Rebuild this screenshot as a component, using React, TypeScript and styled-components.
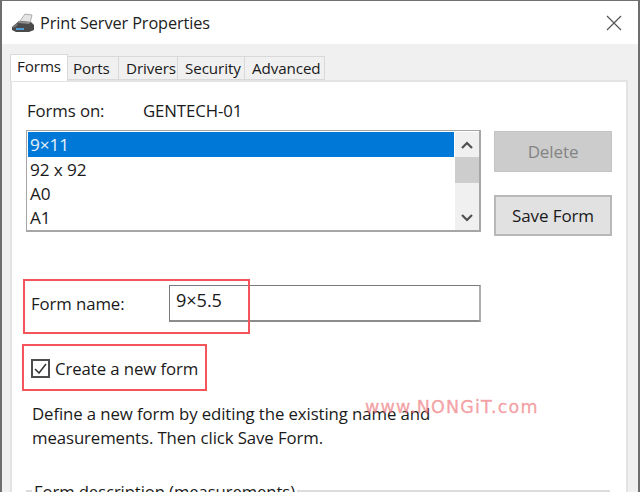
import styled, { createGlobalStyle } from "styled-components";

const GlobalStyle = createGlobalStyle`
  html, body {
    margin: 0;
    padding: 0;
    background: #ffffff;
  }
  * {
    box-sizing: border-box;
  }
`;

const Window = styled.div`
  position: relative;
  width: 640px;
  height: 492px;
  overflow: hidden;
  display: flex;
  flex-direction: column;
  border-top: 1px solid #707070;
  border-left: 2px solid #6e6e6e;
  border-right: 2px solid #6e6e6e;
  font-family: "Open Sans", "Noto Sans", sans-serif;
  font-size: 16.8px;
  color: #1a1a1a;
  letter-spacing: -0.1px;
`;

const TitleBar = styled.div`
  height: 43px;
  flex: none;
  display: flex;
  align-items: center;
  padding: 0 16px 0 9px;
  gap: 5px;
  background: #ffffff;
`;

const Title = styled.div`
  flex: 1;
  font-size: 16.3px;
  color: #222222;
`;

const Chrome = styled.div`
  flex: 1;
  display: flex;
  flex-direction: column;
  background: #f0f0f0;
  padding: 10px 10px 0 8px;
`;

const TabStrip = styled.div`
  height: 26px;
  flex: none;
  display: flex;
  align-items: flex-end;
  position: relative;
  z-index: 1;
`;

const Tab = styled.div<{ $active?: boolean; $width: number; $inset: number }>`
  width: ${({ $width }) => $width}px;
  height: ${({ $active }) => ($active ? 27 : 24)}px;
  margin-bottom: ${({ $active }) => ($active ? -1 : 0)}px;
  padding: 0 0 ${({ $active }) => ($active ? 4 : 0)}px ${({ $inset }) => $inset}px;
  display: flex;
  align-items: center;
  background: ${({ $active }) => ($active ? "#ffffff" : "#f0f0f0")};
  border: 1px solid #d9d9d9;
  border-bottom: ${({ $active }) => ($active ? "none" : "1px solid #d9d9d9")};
  border-left: ${({ $active }) => ($active ? "1px solid #d9d9d9" : "none")};
  font-size: 15.2px;
`;

const Panel = styled.div`
  flex: 1;
  display: flex;
  flex-direction: column;
  background: #ffffff;
  border: 2px solid #e3e3e3;
  border-bottom: none;
  padding: 16px 14px 0 14px;
`;

const ServerRow = styled.div`
  display: flex;
  height: 24px;
  align-items: center;
  padding-left: 1px;
`;

const ServerLabel = styled.div`
  width: 116px;
`;

const ListRow = styled.div`
  display: flex;
  margin-top: 8px;
  gap: 13px;
`;

const ListBox = styled.div`
  width: 455px;
  height: 102px;
  flex: none;
  display: flex;
  border: 1px solid #a6a6a6;
  border-right-width: 2px;
  border-bottom-width: 2px;
  padding: 1px 0 0 1px;
`;

const Items = styled.div`
  flex: 1;
  overflow: hidden;
`;

const Item = styled.div<{ $selected?: boolean }>`
  height: ${({ $selected }) => ($selected ? 25 : 24)}px;
  padding-left: 2px;
  display: flex;
  align-items: center;
  background: ${({ $selected }) => ($selected ? "#0078d7" : "transparent")};
  color: ${({ $selected }) => ($selected ? "#e8f2fb" : "#1a1a1a")};
  font-size: 17.2px;
`;

const ScrollBar = styled.div`
  width: 24px;
  flex: none;
  margin-left: 1px;
  display: flex;
  flex-direction: column;
  background: #f0f0f0;
`;

const ScrollButton = styled.div`
  height: 25px;
  flex: none;
  display: flex;
  align-items: center;
  justify-content: center;
`;

const ScrollThumb = styled.div`
  height: 26px;
  flex: none;
  background: #cdcdcd;
`;

const ScrollTrack = styled.div`
  flex: 1;
`;

const ButtonColumn = styled.div`
  display: flex;
  flex-direction: column;
  gap: 23px;
  padding-top: 1px;
`;

const Button = styled.div<{ $disabled?: boolean }>`
  width: 118px;
  height: 41px;
  display: flex;
  align-items: center;
  justify-content: center;
  font-size: 17px;
  background: ${({ $disabled }) => ($disabled ? "#cccccc" : "#e1e1e1")};
  border: ${({ $disabled }) =>
    $disabled ? "1px solid #c4c4c4" : "2px solid #b8b8b8"};
  color: ${({ $disabled }) => ($disabled ? "#848484" : "#1a1a1a")};
`;

const NameRow = styled.div`
  display: flex;
  align-items: flex-start;
  margin-top: 49px;
  padding-left: 5px;
`;

const NameLabel = styled.div`
  width: 138px;
  padding-top: 7px;
`;

const NameInput = styled.div`
  width: 312px;
  height: 37px;
  padding: 2px 6px;
  font-size: 18.2px;
  border: 1px solid #7a7a7a;
  border-right: 2px solid #adadad;
  border-bottom: 2px solid #8c8c8c;
`;

const CheckRow = styled.div`
  display: flex;
  align-items: center;
  gap: 5px;
  margin-top: 35px;
  padding-left: 5px;
`;

const CheckBox = styled.div`
  width: 19px;
  height: 19px;
  flex: none;
  display: flex;
  align-items: center;
  justify-content: center;
  border: 2px solid #4d4d4d;
`;

const HelpText = styled.div`
  margin-top: 22px;
  padding-left: 6px;
  line-height: 24px;
  width: 422px;
`;

const FormGroup = styled.div`
  margin-top: 40px;
  height: 30px;
  border-top: 2px solid #dcdcdc;
  margin-right: 2px;
`;

const GroupTitle = styled.div`
  display: inline-block;
  position: relative;
  top: -12px;
  margin-left: 6px;
  padding: 0 2px;
  background: #ffffff;
  font-size: 16.7px;
`;

const Highlight = styled.div<{ $left: number; $top: number; $width: number; $height: number }>`
  position: absolute;
  left: ${({ $left }) => $left}px;
  top: ${({ $top }) => $top}px;
  width: ${({ $width }) => $width}px;
  height: ${({ $height }) => $height}px;
  border: 2px solid #f4555a;
  pointer-events: none;
`;

const Watermark = styled.div`
  position: absolute;
  left: 363px;
  top: 396px;
  font-family: "DejaVu Sans", sans-serif;
  font-size: 17.5px;
  letter-spacing: 1.2px;
  -webkit-text-stroke: 0.4px rgba(238, 110, 115, 0.55);
  color: rgba(238, 110, 115, 0.6);
  pointer-events: none;
`;

function PrinterIcon() {
  return (
    <svg width="24" height="22" viewBox="0 0 24 22">
      <path d="M9 9 L14 2 L21 3 L19 11 Z" fill="#e4e4e4" stroke="#9a9a9a" strokeWidth="0.8" />
      <path d="M1 15 L8 9 L20 10 L23 13 L23 18 L18 20 L5 20 L1 18 Z" fill="#4a4a4a" />
      <path d="M8 9 L20 10 L18 12 L7 11 Z" fill="#8c8c8c" />
      <path d="M5 16 L13 16 L13 18 L5 18 Z" fill="#4f9bd4" />
      <path d="M2 14 L7 11 L6 14 L2 16 Z" fill="#777777" />
    </svg>
  );
}

function CloseIcon() {
  return (
    <svg width="16" height="16" viewBox="0 0 16 16">
      <path d="M1 1 L15 15 M15 1 L1 15" stroke="#555555" strokeWidth="1.2" fill="none" />
    </svg>
  );
}

function Chevron({ up }: { up?: boolean }) {
  return (
    <svg width="12" height="8" viewBox="0 0 12 8">
      <path
        d={up ? "M1 7 L6 2 L11 7" : "M1 1 L6 6 L11 1"}
        stroke="#505050"
        strokeWidth="2.2"
        fill="none"
      />
    </svg>
  );
}

const tabs = [
  { label: "Forms", width: 58, inset: 6 },
  { label: "Ports", width: 51, inset: 5 },
  { label: "Drivers", width: 59, inset: 7 },
  { label: "Security", width: 67, inset: 7 },
  { label: "Advanced", width: 80, inset: 7 },
];

const forms = ["9×11", "92 x 92", "A0", "A1"];

export default function App() {
  return (
    <>
      <GlobalStyle />
      <Window>
        <TitleBar>
          <PrinterIcon />
          <Title>Print Server Properties</Title>
          <CloseIcon />
        </TitleBar>
        <Chrome>
          <TabStrip>
            {tabs.map((tab, index) => (
              <Tab key={tab.label} $active={index === 0} $width={tab.width} $inset={tab.inset}>
                {tab.label}
              </Tab>
            ))}
          </TabStrip>
          <Panel>
            <ServerRow>
              <ServerLabel>Forms on:</ServerLabel>
              <div>GENTECH-01</div>
            </ServerRow>
            <ListRow>
              <ListBox>
                <Items>
                  {forms.map((form, index) => (
                    <Item key={form} $selected={index === 0}>
                      {form}
                    </Item>
                  ))}
                </Items>
                <ScrollBar>
                  <ScrollButton>
                    <Chevron up />
                  </ScrollButton>
                  <ScrollThumb />
                  <ScrollTrack />
                  <ScrollButton>
                    <Chevron />
                  </ScrollButton>
                </ScrollBar>
              </ListBox>
              <ButtonColumn>
                <Button $disabled>Delete</Button>
                <Button>Save Form</Button>
              </ButtonColumn>
            </ListRow>
            <NameRow>
              <NameLabel>Form name:</NameLabel>
              <NameInput>9×5.5</NameInput>
            </NameRow>
            <CheckRow>
              <CheckBox>
                <svg width="13" height="11" viewBox="0 0 13 11">
                  <path d="M1 6 L5 10 L12 1" stroke="#333333" strokeWidth="1.5" fill="none" />
                </svg>
              </CheckBox>
              <div>Create a new form</div>
            </CheckRow>
            <HelpText>
              Define a new form by editing the existing name and measurements. Then click Save Form.
            </HelpText>
            <FormGroup>
              <GroupTitle>Form description (measurements)</GroupTitle>
            </FormGroup>
          </Panel>
        </Chrome>
        <Highlight $left={21} $top={278} $width={227} $height={55} />
        <Highlight $left={20} $top={343} $width={185} $height={47} />
        <Watermark>www.NONGiT.com</Watermark>
      </Window>
    </>
  );
}
